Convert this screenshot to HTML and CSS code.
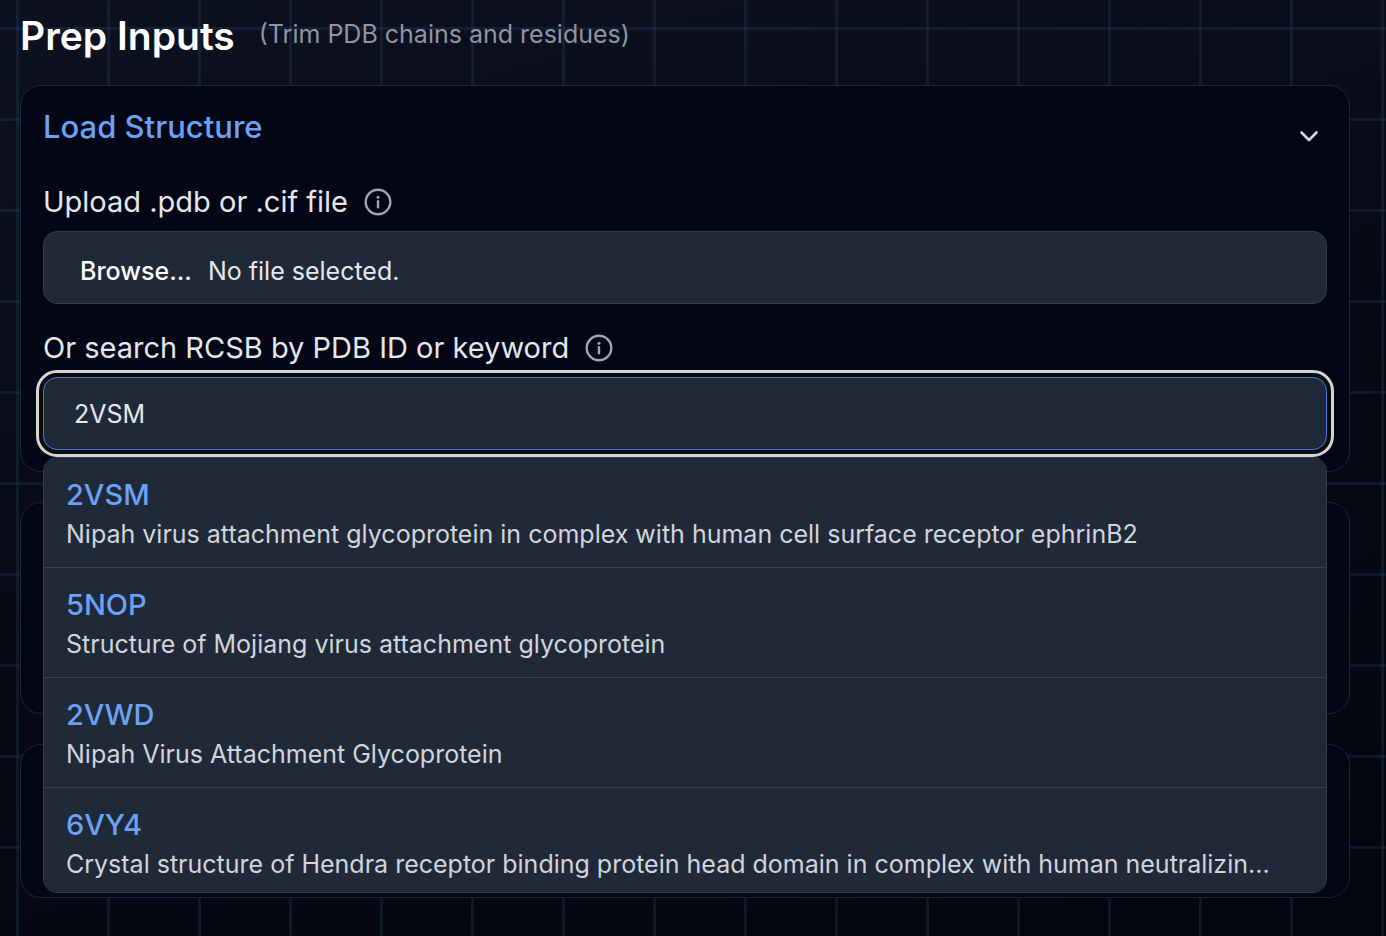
FILE: index.html
```html
<!DOCTYPE html>
<html lang="en">
<head>
<meta charset="utf-8">
<meta name="viewport" content="width=device-width, initial-scale=1">
<title>Prep Inputs</title>
<link rel="stylesheet" href="styles.css">
</head>
<body>
<main class="page">
  <header class="page-header">
    <h1 class="page-title">Prep Inputs</h1>
    <p class="page-note">(Trim PDB chains and residues)</p>
  </header>

  <section class="card card-load">
    <div class="card-header">
      <h2 class="card-title">Load Structure</h2>
      <button class="collapse" type="button" aria-label="Collapse section">
        <svg class="chevron" viewBox="0 0 28 28" aria-hidden="true"><path d="M6.5 11.5 14 19l7.5-7.5"/></svg>
      </button>
    </div>

    <div class="field">
      <div class="label-row">
        <label class="label" for="structure-file">Upload .pdb or .cif file</label>
        <button class="info" type="button" aria-label="About file upload">
          <svg class="info-icon" viewBox="0 0 28 28" aria-hidden="true"><circle cx="14" cy="14" r="12.3"/><path d="M14 13.2v6"/><circle class="dot" cx="14" cy="9.2" r="1.5"/></svg>
        </button>
      </div>
      <input class="file-input" id="structure-file" type="file" accept=".pdb,.cif">
      <label class="control file-control" for="structure-file">
        <span class="file-browse">Browse...</span>
        <span>No file selected.</span>
      </label>
    </div>

    <div class="field">
      <div class="label-row">
        <label class="label" for="search">Or search RCSB by PDB ID or keyword</label>
        <button class="info" type="button" aria-label="About RCSB search">
          <svg class="info-icon" viewBox="0 0 28 28" aria-hidden="true"><circle cx="14" cy="14" r="12.3"/><path d="M14 13.2v6"/><circle class="dot" cx="14" cy="9.2" r="1.5"/></svg>
        </button>
      </div>
      <div class="search">
        <input class="control search-input" id="search" type="text" value="2VSM" autocomplete="off">
        <ul class="results">
          <li><button class="result" type="button"><span class="result-id">2VSM</span><span class="result-title">Nipah virus attachment glycoprotein in complex with human cell surface receptor ephrinB2</span></button></li>
          <li><button class="result" type="button"><span class="result-id">5NOP</span><span class="result-title">Structure of Mojiang virus attachment glycoprotein</span></button></li>
          <li><button class="result" type="button"><span class="result-id">2VWD</span><span class="result-title">Nipah Virus Attachment Glycoprotein</span></button></li>
          <li><button class="result" type="button"><span class="result-id">6VY4</span><span class="result-title">Crystal structure of Hendra receptor binding protein head domain in complex with human neutralizin...</span></button></li>
        </ul>
      </div>
    </div>
  </section>

  <section class="card card-medium"></section>
  <section class="card card-small"></section>
</main>
</body>
</html>
```

FILE: styles.css
```css
* {
  box-sizing: border-box;
}

body {
  margin: 0;
  min-height: 100vh;
  font-family: Inter, sans-serif;
  font-size: 25px;
  line-height: 36px;
  color: #e5e7eb;
  background-color: #060914;
  background-image:
    linear-gradient(to right, rgba(56, 104, 146, 0.17) 3px, transparent 3px),
    linear-gradient(to bottom, rgba(56, 104, 146, 0.17) 3px, transparent 3px),
    linear-gradient(165deg, #0c1120 0%, #0b0f1c 20%, #060914 55%, #04060f 100%);
  background-size: 91px 91px, 91px 91px, 100% 100%;
  background-position: 16px 0, 0 27px, 0 0;
}

h1, h2, p, ul {
  margin: 0;
  padding: 0;
}

button, input {
  font: inherit;
  color: inherit;
}

button {
  padding: 0;
  border: 0;
  background: none;
  cursor: pointer;
}

.page {
  display: flex;
  flex-direction: column;
  gap: 30px;
  padding: 14px 36px 38px 20px;
}

.page-header {
  display: flex;
  align-items: flex-start;
  gap: 24px;
  height: 41px;
}

.page-title {
  font-size: 39px;
  line-height: 44px;
  font-weight: 600;
  color: #fff;
}

.page-note {
  line-height: 40px;
  color: #8f95a3;
}

.card {
  border: 1px solid #1e2433;
  border-radius: 21px;
  background: #030614;
}

.card-load {
  display: flex;
  flex-direction: column;
  gap: 22px;
  padding: 22px 22px 21px;
}

.card-medium {
  min-height: 212px;
}

.card-small {
  min-height: 154px;
}

.card-header {
  display: flex;
  justify-content: space-between;
  height: 54px;
}

.card-title {
  font-size: 31px;
  line-height: 38px;
  font-weight: 500;
  color: #6ba1f6;
}

.collapse {
  align-self: center;
  margin-right: 4px;
  height: 28px;
}

.chevron {
  display: block;
  width: 28px;
  height: 28px;
  fill: none;
  stroke: #d6d8dd;
  stroke-width: 2.6;
  stroke-linecap: round;
  stroke-linejoin: round;
}

.field + .field {
  margin-top: 4px;
}

.label-row {
  display: flex;
  align-items: center;
  gap: 16px;
  height: 36px;
  margin-bottom: 11px;
}

.label {
  font-size: 29px;
}

.info-icon {
  display: block;
  width: 28px;
  height: 28px;
  fill: none;
  stroke: #a1a5b1;
  stroke-width: 2.4;
  stroke-linecap: round;
}

.dot {
  fill: #a1a5b1;
  stroke: none;
}

.control {
  width: 100%;
  height: 73px;
  border: 1px solid #333d4c;
  border-radius: 14px;
  background: #202938;
}

.file-input {
  position: absolute;
  width: 1px;
  height: 1px;
  opacity: 0;
}

.file-control {
  display: flex;
  align-items: center;
  gap: 16px;
  padding: 6px 36px 0;
}

.file-browse {
  font-weight: 500;
  color: #fff;
}

.search {
  position: relative;
}

.search-input {
  display: block;
  padding: 0 30px;
  border-color: #4179df;
  outline: 3px solid #d5d5d2;
  outline-offset: 4px;
  box-shadow: 0 0 0 4px #0b0c0c;
}

.results {
  position: absolute;
  top: calc(100% + 7px);
  left: 0;
  right: 0;
  max-height: 436px;
  overflow: auto;
  scrollbar-width: none;
  list-style: none;
  border: 1px solid #333d4c;
  border-radius: 14px;
  background: #202938;
}

.result {
  display: flex;
  flex-direction: column;
  width: 100%;
  padding: 17px 22px 14px;
  border-bottom: 1px solid #374151;
  text-align: left;
}

.result-id {
  font-size: 29px;
  line-height: 40px;
  font-weight: 500;
  color: #6ba1f6;
}

.result-title {
  width: 100%;
  line-height: 38px;
  overflow: hidden;
  white-space: nowrap;
  text-overflow: ellipsis;
  color: #d1d5db;
}
```
